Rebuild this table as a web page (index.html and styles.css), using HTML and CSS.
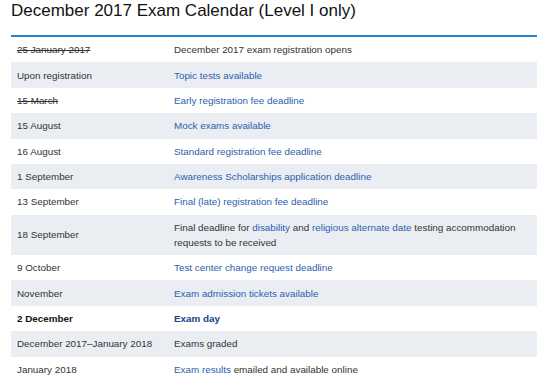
FILE: index.html
```html
<!DOCTYPE html>
<html lang="en">
<head>
<meta charset="utf-8">
<title>December 2017 Exam Calendar</title>
<link rel="stylesheet" href="styles.css">
</head>
<body>
<div class="page">
  <h1 class="title">December 2017 Exam Calendar (Level I only)</h1>
  <table class="cal">
    <colgroup><col class="c-date"><col class="c-event"></colgroup>
    <tbody>
      <tr><td><s>25 January 2017</s></td><td>December 2017 exam registration opens</td></tr>
      <tr><td>Upon registration</td><td><a href="#">Topic tests available</a></td></tr>
      <tr><td><s>15 March</s></td><td><a href="#">Early registration fee deadline</a></td></tr>
      <tr><td>15 August</td><td><a href="#">Mock exams available</a></td></tr>
      <tr><td>16 August</td><td><a href="#">Standard registration fee deadline</a></td></tr>
      <tr><td>1 September</td><td><a href="#">Awareness Scholarships application deadline</a></td></tr>
      <tr><td>13 September</td><td><a href="#">Final (late) registration fee deadline</a></td></tr>
      <tr><td>18 September</td><td>Final deadline for <a href="#">disability</a> and <a href="#">religious alternate date</a> testing accommodation requests to be received</td></tr>
      <tr><td>9 October</td><td><a href="#">Test center change request deadline</a></td></tr>
      <tr><td>November</td><td><a href="#">Exam admission tickets available</a></td></tr>
      <tr class="strong"><td>2 December</td><td><a href="#">Exam day</a></td></tr>
      <tr><td>December 2017–January 2018</td><td>Exams graded</td></tr>
      <tr><td>January 2018</td><td><a href="#">Exam results</a> emailed and available online</td></tr>
    </tbody>
  </table>
</div>
</body>
</html>
```
FILE: styles.css
```css
html, body {
  margin: 0;
  padding: 0;
  background: #ffffff;
}
.page {
  padding: 1px 1px 0 11px;
  font-family: "Liberation Sans", Arial, sans-serif;
}
.title {
  margin: 0;
  font-size: 17px;
  line-height: 20px;
  font-weight: normal;
  color: #111111;
  height: 34px;
}
.cal {
  width: 526px;
  border-collapse: collapse;
  border-top: 2px solid #1e87d6;
  font-size: 9.85px;
  color: #333333;
  table-layout: fixed;
}
.c-date { width: 157px; }
.cal td {
  padding: 5.2px 12px 5.2px 6px;
  line-height: 15px;
  vertical-align: middle;
}
.cal tr:nth-child(even) td {
  background: #eaeef3;
}
.cal a {
  color: #2d5eae;
  text-decoration: none;
}
.cal s {
  text-decoration: line-through;
}
.strong td {
  font-weight: bold;
  color: #111111;
}
.strong a {
  color: #17418f;
}
```
